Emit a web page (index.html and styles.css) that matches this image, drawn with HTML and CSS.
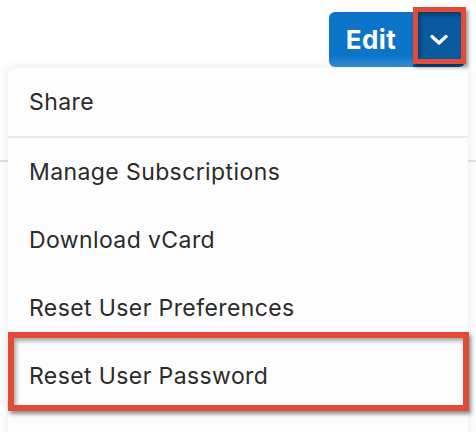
FILE: index.html
```html
<!DOCTYPE html>
<html lang="en">
<head>
    <meta charset="UTF-8">
    <meta name="viewport" content="width=device-width, initial-scale=1.0">
    <title>User Record - Actions</title>
    <link rel="stylesheet" href="styles.css">
</head>
<body>
    <div class="header">
        <div class="actions">
            <button class="btn-edit">Edit</button>
            <button class="btn-toggle">
                <svg width="18" height="12" viewBox="0 0 18 12">
                    <path d="M2 2.5 L9 9 L16 2.5" fill="none" stroke="#fff" stroke-width="3.2" stroke-linecap="round" stroke-linejoin="round"/>
                </svg>
            </button>
        </div>
    </div>

    <ul class="menu">
        <li class="menu-item first">Share</li>
        <li class="menu-item">Manage Subscriptions</li>
        <li class="menu-item">Download vCard</li>
        <li class="menu-item">Reset User Preferences</li>
        <li class="menu-item">Reset User Password</li>
    </ul>

    <!-- annotation boxes -->
    <div class="mark mark-toggle"></div>
    <div class="mark mark-item"></div>
</body>
</html>
```

FILE: styles.css
```css
body {
    margin: 0;
    width: 476px;
    height: 432px;
    overflow: hidden;
    position: relative;
    background: #fff;
    font-family: Inter, "Noto Sans", sans-serif;
}
.header {
    height: 162px;
    border-bottom: 2px solid #dfe4e8;
    box-sizing: border-box;
}
.actions {
    display: flex;
    justify-content: flex-end;
    padding: 12px 11px 0 0;
}
.actions button {
    border: none;
    height: 55px;
    color: #fff;
    font-family: Inter, "Noto Sans", sans-serif;
    padding: 0;
}
.btn-edit {
    width: 84px;
    border-radius: 6px 0 0 6px;
    background: linear-gradient(180deg, #0c74c9 0%, #0c74c9 80%, #3a8fd6 100%);
    font-size: 26px;
    font-weight: 700;
    letter-spacing: 0.4px;
}
.btn-toggle {
    width: 52px;
    border-radius: 0 6px 6px 0;
    background: #0a5a9f;
    display: flex;
    align-items: center;
    justify-content: center;
}
.menu {
    position: absolute;
    left: 8px;
    right: 8px;
    top: 68px;
    bottom: 0;
    margin: 0;
    padding: 0;
    list-style: none;
    background: #fdfdfd;
    border-radius: 8px 8px 0 0;
    box-shadow: 0 0 10px 3px rgba(0, 0, 0, 0.06);
    overflow: hidden;
}
.menu-item {
    height: 68px;
    display: flex;
    align-items: center;
    padding-left: 21px;
    font-size: 23px;
    letter-spacing: 0.4px;
    color: #2b2b2b;
}
.menu-item.first {
    border-bottom: 2px solid #e6eaed;
}
.mark {
    position: absolute;
    border: 5px solid #e24b37;
    box-shadow: 2px 3px 4px rgba(0, 0, 0, 0.45), inset 2px 3px 4px rgba(0, 0, 0, 0.35);
}
.mark-toggle {
    left: 413px;
    top: 7px;
    width: 43px;
    height: 47px;
}
.mark-item {
    left: 8px;
    top: 332px;
    border-width: 6px;
    width: 449px;
    height: 67px;
}
```
